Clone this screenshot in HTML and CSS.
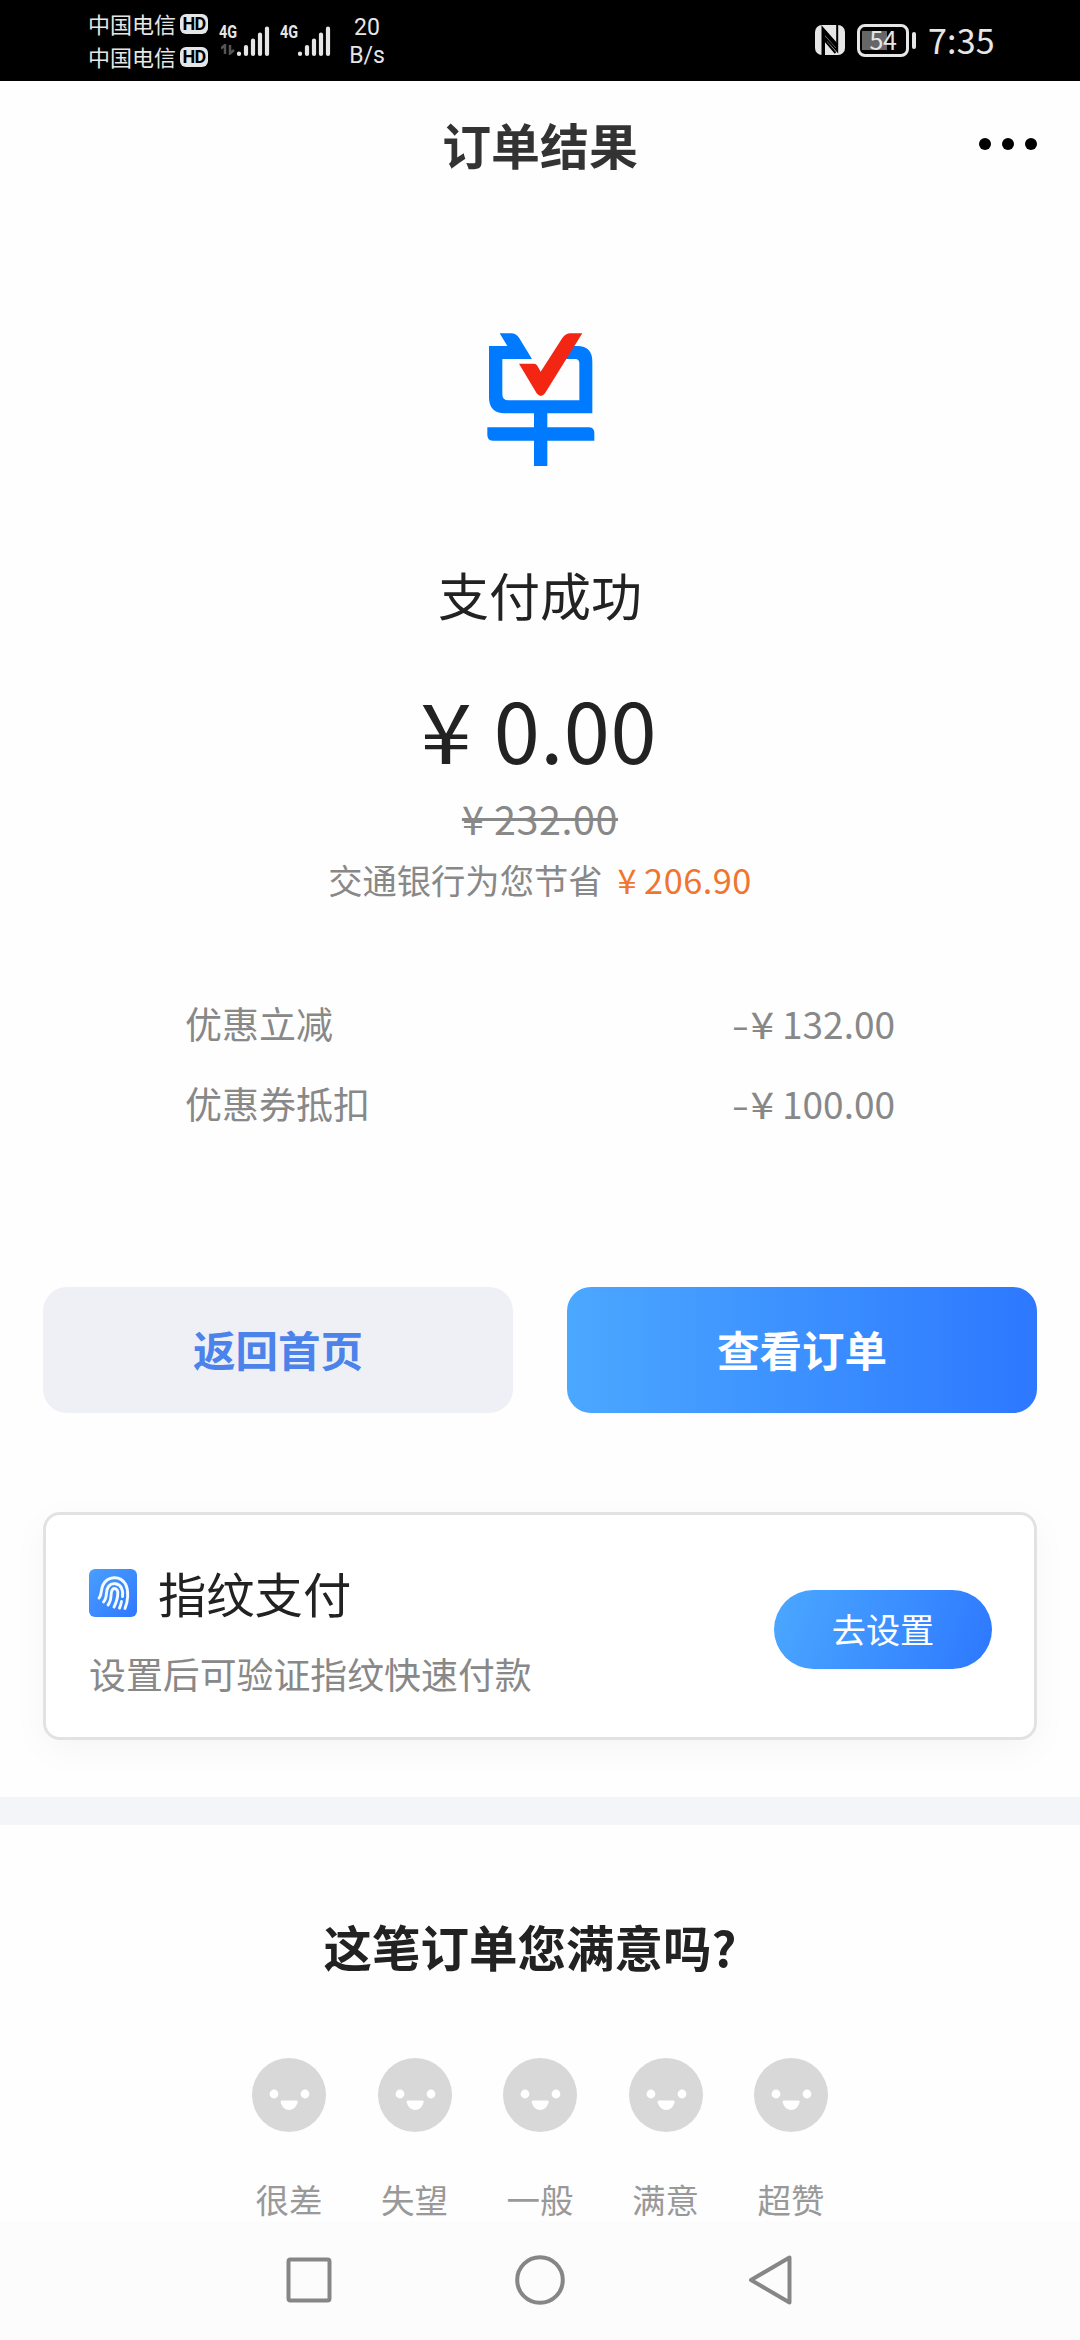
FILE: index.html
```html
<!DOCTYPE html>
<html lang="zh-CN">
<head>
<meta charset="utf-8">
<title>订单结果</title>
<link rel="stylesheet" href="styles.css">
</head>
<body>
<svg class="defs" width="0" height="0">
  <defs>
    <symbol id="signal" viewBox="0 0 34 32">
      <path d="M3 28.500V29M10 22V29M17 15.500V29M24 9.500V29M31 3.500V29" fill="none" stroke="#e6e6e6" stroke-width="4.200" stroke-linecap="round"/>
    </symbol>
    <symbol id="face" viewBox="0 0 74 74">
      <circle cx="37" cy="37" r="37" fill="#d8d8d8"/>
      <circle cx="22" cy="36" r="4.400" fill="#fff"/>
      <circle cx="53" cy="36" r="4.400" fill="#fff"/>
      <path d="M30 42.500H44.500Q46 42.500 45.700 44C44.500 49 41 52 37.200 52S29.700 49 28.600 44Q28.400 42.500 30 42.500Z" fill="#fff"/>
    </symbol>
  </defs>
</svg>

<div class="status">
  <div class="carriers">
    <div class="carrier"><span>中国电信</span><b class="hd">HD</b></div>
    <div class="carrier"><span>中国电信</span><b class="hd">HD</b></div>
  </div>
  <div class="cell">
    <div class="net"><span>4G</span>
      <svg width="14" height="11" viewBox="0 0 14 11"><path d="M0 4.500L4 1V10M9 1V9.500L13 6" fill="none" stroke="#555" stroke-width="2.500"/></svg>
    </div>
    <svg class="bars" width="34" height="32"><use href="#signal"/></svg>
  </div>
  <div class="cell">
    <div class="net"><span>4G</span></div>
    <svg class="bars" width="34" height="32"><use href="#signal"/></svg>
  </div>
  <div class="speed"><span>20</span><span>B/s</span></div>
  <svg class="nfc" width="30" height="30" viewBox="0 0 30 30">
    <rect width="30" height="30" rx="7" fill="#e6e6e6"/>
    <path d="M7.500 30V3L22 20V24L10 10.500V30" fill="#000"/>
    <path d="M10.500 12L18 30H10.500Z" fill="#e6e6e6"/>
    <path d="M7.500 30V3L22.500 20" fill="none" stroke="#000" stroke-width="2"/>
    <path d="M22.200 0V26L11 13.500V17L20.500 28" fill="none" stroke="#000" stroke-width="2"/>
  </svg>
  <div class="battery"><span>54</span></div>
  <div class="nub"></div>
  <div class="clock">7:35</div>
</div>

<header class="header">
  <h1>订单结果</h1>
  <svg class="more" width="60" height="14" viewBox="0 0 60 14"><circle cx="7" cy="7" r="6"/><circle cx="30" cy="7" r="6"/><circle cx="53" cy="7" r="6"/></svg>
</header>

<main class="result">
  <svg class="logo" width="160" height="180" viewBox="0 0 480 540">
    <path d="M119 70H153Q169 70 178 85L216 147H127V253Q127 271 145 271H358V160Q358 147 345 147H316L338 108H352Q397 108 397 155V310H262V352H386Q403 352 403 369V392H262V468H222V392H98Q82 392 82 375V352H222V310H134Q87 310 87 262V108H142Z" fill="#007bff"/>
    <path d="M177 161H222Q229 161 232 167L242 185L307 84Q316 70 332 70H367L255 250Q243 266 230 250Z" fill="#f22613"/>
  </svg>
  <p class="state">支付成功</p>
  <p class="amount"><span class="yen">¥</span> 0.00</p>
  <p class="origin">¥ 232.00</p>
  <p class="saving"><span>交通银行为您节省</span><span class="saved"><span class="yen">¥</span>206.90</span></p>
  <dl class="discounts">
    <div class="row"><dt>优惠立减</dt><dd><span class="minus">-</span><span class="yen">¥</span> 132.00</dd></div>
    <div class="row"><dt>优惠券抵扣</dt><dd><span class="minus">-</span><span class="yen">¥</span> 100.00</dd></div>
  </dl>
  <div class="actions">
    <a class="btn btn-plain">返回首页</a>
    <a class="btn btn-primary">查看订单</a>
  </div>
  <section class="card">
    <div class="info">
      <div class="card-title">
        <svg width="48" height="48" viewBox="0 0 48 48">
          <defs><linearGradient id="tile" x1="0" y1="0" x2="1" y2="1"><stop offset="0" stop-color="#4a9fff"/><stop offset="1" stop-color="#2f78ff"/></linearGradient></defs>
          <rect width="48" height="48" rx="6" fill="url(#tile)"/>
          <g fill="none" stroke="#f4fbff" stroke-width="2.900" stroke-linecap="round">
            <path d="M10 29C13 26 11.500 21 14 16C18.500 7 31 6 36.500 15C40 22 39 32 36 39.500"/>
            <path d="M14.500 33C19 28 16 22 19.500 17.500C23 13 30 14 32.500 19C34 22 34 24.500 33.500 27.500"/>
            <path d="M19 36C24 30 20.500 24 23.500 20.500C25.500 18.500 28.500 20 28.800 23C29 29 27.500 33 25 38"/>
            <path d="M32.500 32.500C32 35 31.500 37 30.500 39"/>
          </g>
        </svg>
        <h2>指纹支付</h2>
      </div>
      <p>设置后可验证指纹快速付款</p>
    </div>
    <a class="setup">去设置</a>
  </section>
</main>

<section class="survey">
  <h2>这笔订单您满意吗?</h2>
  <div class="rates">
    <div class="rate"><svg width="74" height="74"><use href="#face"/></svg><span>很差</span></div>
    <div class="rate"><svg width="74" height="74"><use href="#face"/></svg><span>失望</span></div>
    <div class="rate"><svg width="74" height="74"><use href="#face"/></svg><span>一般</span></div>
    <div class="rate"><svg width="74" height="74"><use href="#face"/></svg><span>满意</span></div>
    <div class="rate"><svg width="74" height="74"><use href="#face"/></svg><span>超赞</span></div>
  </div>
</section>

<nav class="nav">
  <svg width="52" height="52" viewBox="0 0 52 52"><rect x="5.500" y="5.500" width="41" height="41" rx="2"/></svg>
  <svg width="52" height="52" viewBox="0 0 52 52"><circle cx="26" cy="26" r="22.800"/></svg>
  <svg width="52" height="52" viewBox="0 0 52 52"><path d="M44.500 3.500V48.500L6 26Z"/></svg>
</nav>
</body>
</html>
```
FILE: styles.css
```css
* { box-sizing: border-box; margin: 0; padding: 0; }
body {
  width: 1080px;
  height: 2340px;
  overflow: hidden;
  display: flex;
  flex-direction: column;
  background: #fefefe;
  color: #222;
  font-family: "Noto Sans CJK SC", sans-serif;
}
svg { display: block; flex: none; }
.defs { position: absolute; }

.status {
  height: 81px;
  flex: none;
  display: flex;
  align-items: flex-start;
  background: #000;
  color: #e6e6e6;
  padding-left: 88px;
}
.carriers { padding-top: 7px; width: 121px; }
.carrier { display: flex; align-items: center; height: 33px; font-size: 22px; line-height: 33px; gap: 4px; white-space: nowrap; }
.hd {
  width: 28px;
  height: 20px;
  border-radius: 6px;
  background: #e6e6e6;
  color: #000;
  font: 700 18px/20px "Roboto", sans-serif;
  letter-spacing: -0.8px;
  text-align: center;
}
.cell { display: flex; width: 51px; margin-left: 10px; }
.net { width: 17px; padding-top: 22px; font: 700 18px/19px "Roboto", sans-serif; }
.net span { display: block; width: 22px; transform: scaleX(0.8); transform-origin: left; }
.net svg { margin: 3px 0 0 2px; }
.bars { margin-top: 25px; }
.speed { display: flex; flex-direction: column; align-items: center; width: 40px; margin-left: 16px; padding-top: 14px; font: 23px/28px "Roboto", sans-serif; }
.nfc { margin: 25px 0 0 428px; }
.battery {
  width: 52px;
  height: 33px;
  margin: 24px 0 0 12px;
  border: 3px solid #e6e6e6;
  border-radius: 8px;
  background: linear-gradient(90deg, #666, #666) 2px 4px / 25px 19px no-repeat;
  font-size: 25px;
  line-height: 24px;
  letter-spacing: -0.500px;
  text-align: center;
}
.nub { width: 4px; height: 17px; margin: 32px 0 0 3px; border-radius: 2px; background: #e6e6e6; }
.clock { margin: 20px 0 0 12px; font-size: 34px; line-height: 40px; letter-spacing: 0.200px; }

.header {
  height: 125px;
  flex: none;
  display: grid;
  grid-template-columns: 1fr auto 1fr;
  align-items: center;
  padding-right: 42px;
  padding-left: 42px;
}
.header h1 { grid-column: 2; color: #333; font-size: 48.900px; line-height: 60px; font-weight: 700; }
.more { justify-self: end; }

.result { flex: none; display: flex; flex-direction: column; height: 1591px; background: #fefefe; }
.logo { margin: 104px auto 0; }
.state { margin-top: 74px; height: 60px; font-size: 51px; line-height: 60px; text-align: center; }
.amount { margin-top: 53px; height: 100px; font-size: 83px; line-height: 103px; letter-spacing: 0.500px; word-spacing: 5px; text-align: center; }
.amount .yen { display: inline-block; transform: scaleX(1.120); }
.origin { margin-top: 21px; height: 40px; color: #888; font-size: 39.500px; line-height: 40px; letter-spacing: 0.600px; text-align: center; text-decoration: line-through 3px; }
.saving { display: flex; justify-content: center; gap: 15px; margin-top: 21px; height: 40px; color: #888; font-size: 34.300px; line-height: 40px; }
.saved { color: #f0752f; letter-spacing: 0.500px; }
.saved .yen { margin-right: 7px; }
.discounts { display: flex; flex-direction: column; gap: 40px; margin: 104px 185px 0; color: #888; font-size: 37px; line-height: 40px; }
.row { display: flex; justify-content: space-between; height: 40px; }
.row .yen { display: inline-block; transform: scaleX(1.150); }
.minus { display: inline-block; margin-right: 5px; transform: scaleX(1.350); }
.row dd { word-spacing: 1px; }
.actions { display: grid; grid-template-columns: 1fr 1fr; gap: 54px; margin: 164px 43px 0; }
.btn { height: 126px; border-radius: 24px; font-size: 42.500px; line-height: 124px; font-weight: 700; text-align: center; }
.btn-plain { background: #eff0f6; color: #4b83ea; }
.btn-primary { background: linear-gradient(90deg, #4ba8ff, #2d78ff); color: #fff; }
.card {
  display: flex;
  align-items: center;
  justify-content: space-between;
  height: 228px;
  margin: 99px 43px 0;
  padding: 0 42px 0 43px;
  border: 3px solid #e2e2e2;
  border-radius: 17px;
  background: #fff;
  box-shadow: 0 10px 36px rgba(0, 0, 0, 0.04);
}
.info { padding-top: 4px; }
.card-title { display: flex; align-items: center; gap: 21px; height: 60px; }
.card-title h2 { padding-bottom: 3px; font-size: 48.300px; line-height: 54px; font-weight: 400; }
.info p { margin-top: 30px; color: #888; font-size: 36.900px; line-height: 40px; }
.setup { width: 218px; height: 79px; margin-top: 7px; border-radius: 40px; background: linear-gradient(110deg, #4ba8ff, #2d78ff); color: #fff; font-size: 34.200px; line-height: 77px; text-align: center; }

.survey { flex: none; height: 424px; border-top: 28px solid #f4f5f8; background: #fefefe; }
.survey h2 { margin-top: 91px; padding-right: 20px; font-size: 48.500px; line-height: 60px; font-weight: 700; text-align: center; }
.rates { display: flex; justify-content: center; gap: 51.500px; margin-top: 82px; }
.rate { display: flex; flex-direction: column; align-items: center; gap: 47px; width: 74px; color: #999; font-size: 33.500px; line-height: 40px; white-space: nowrap; }

.nav { flex: 1; display: flex; justify-content: center; gap: 179px; padding-top: 33px; background: #fcfcfc; }
.nav svg { fill: none; stroke: #868686; stroke-width: 4; stroke-linejoin: round; }
```
